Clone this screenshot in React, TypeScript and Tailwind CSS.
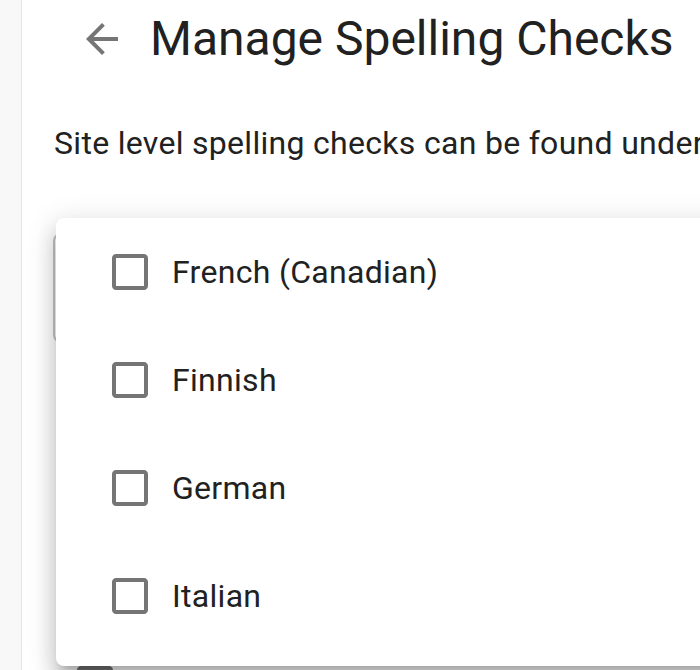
import React from "react";

const languages = ["French (Canadian)", "Finnish", "German", "Italian"];

function ArrowBackIcon({ className }: { className?: string }) {
  return (
    <svg viewBox="0 0 24 24" className={className} fill="currentColor" aria-hidden="true">
      <path d="M20 11H7.83l5.59-5.59L12 4l-8 8 8 8 1.41-1.41L7.83 13H20v-2z" />
    </svg>
  );
}

function CheckboxBlankIcon({ className }: { className?: string }) {
  return (
    <svg viewBox="0 0 24 24" className={className} fill="currentColor" aria-hidden="true">
      <path d="M19 5v14H5V5h14m0-2H5c-1.11 0-2 .9-2 2v14c0 1.1.89 2 2 2h14c1.1 0 2-.9 2-2V5c0-1.1-.9-2-2-2z" />
    </svg>
  );
}

export default function App() {
  return (
    <div className="relative flex h-[670px] w-[700px] overflow-hidden bg-white font-['Roboto','Liberation_Sans',sans-serif] text-[#212121]">
      <aside className="w-[22px] shrink-0 border-r border-[#e6e6e6] bg-[#f8f8f8]" />

      <main className="flex-1 pl-[32px] pt-[15px]">
        <header className="flex h-[48px] items-center">
          <button className="ml-[24px] mr-[24px] text-[#757575]">
            <ArrowBackIcon className="h-[48px] w-[48px]" />
          </button>
          <h1 className="whitespace-nowrap text-[48px] leading-[48px] font-normal">
            Manage Spelling Checks
          </h1>
        </header>

        <p className="mt-[56px] whitespace-nowrap text-[32px] leading-[48px] tracking-[0.3px]">
          Site level spelling checks can be found under
        </p>

        <div className="ml-[-1px] mt-[66px] h-[110px] w-[620px] rounded-[8px] border-2 border-[#c4c4c4]" />

        <div className="ml-[17px] mt-[317px] text-[#757575]">
          <CheckboxBlankIcon className="h-[48px] w-[48px]" />
        </div>
      </main>

      <div className="absolute left-[56px] top-[218px] w-[680px] rounded-[8px] bg-white pb-[16px] shadow-[0px_10px_10px_-6px_rgba(0,0,0,0.2),0px_16px_20px_2px_rgba(0,0,0,0.14),0px_6px_28px_4px_rgba(0,0,0,0.12)]">
        <ul>
          {languages.map((lang) => (
            <li key={lang} className="flex h-[108px] items-center pl-[32px]">
              <span className="p-[18px] text-[#757575]">
                <CheckboxBlankIcon className="h-[48px] w-[48px]" />
              </span>
              <span className="whitespace-nowrap text-[32px] leading-[48px] tracking-[0.3px]">{lang}</span>
            </li>
          ))}
        </ul>
      </div>
    </div>
  );
}
